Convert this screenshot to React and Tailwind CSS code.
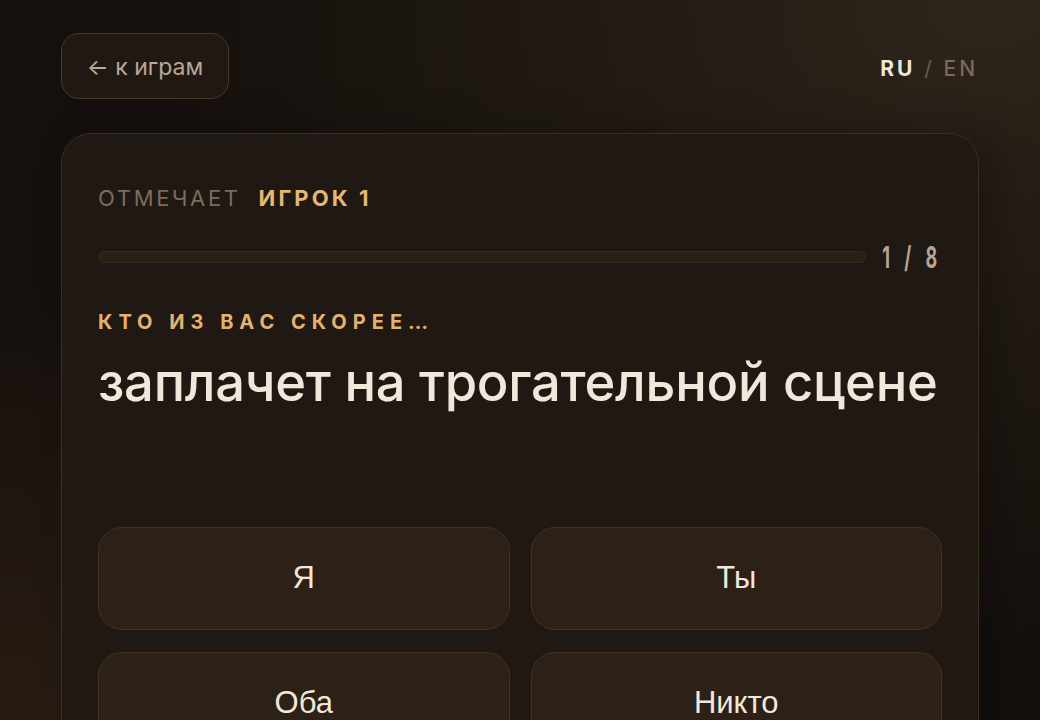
import React from 'react';

const answers = ['Я', 'Ты', 'Оба', 'Никто'];

function App() {
  return (
    <div className="min-h-screen w-full overflow-hidden bg-[#15100d] bg-[radial-gradient(ellipse_at_95%_0%,#2e251b_0%,#211a13_30%,transparent_60%),radial-gradient(ellipse_at_0%_100%,#2a1d13_0%,transparent_45%)] font-['Inter',sans-serif]">
      <div className="px-[61px] pt-[33px]">
        {/* top bar */}
        <div className="flex items-center justify-between">
          <button className="h-[66px] w-[168px] rounded-[18px] border border-[#4a3826] bg-[#201913] pt-[3px] text-[23px] text-[#b9a797]">
            ← к играм
          </button>
          <div className="mr-[1px] pt-[6px] text-[21px] font-bold tracking-[0.14em]">
            <span className="text-[#efe5d9]">RU</span>
            <span className="font-normal text-[#6e5c49]"> / </span>
            <span className="font-medium text-[#7c6a56]">EN</span>
          </div>
        </div>

        {/* question card */}
        <div className="mt-[34px] h-[640px] rounded-[30px] border border-[#3d2e1f] bg-[#201813] px-[36px] pt-[50px] shadow-[20px_0_40px_rgba(0,0,0,0.25)]">
          <div className="flex items-center text-[22px] leading-[28px] tracking-[0.12em]">
            <span className="text-[#7d6c5a]">ОТМЕЧАЕТ</span>
            <span className="ml-[18px] font-bold tracking-[0.14em] text-[#e6b672]">ИГРОК 1</span>
          </div>

          <div className="mt-[30px] flex items-center gap-[21px]">
            <div className="h-[12px] flex-1 rounded-full border border-[#3a2b1d] bg-[#2b2016]" />
            <span className="flex w-[55px] justify-end">
              <span className="inline-block origin-right scale-x-[0.6] whitespace-nowrap text-[30px] leading-[30px] font-bold tracking-[0.28em] text-[#b7a594]">
                1 / 8
              </span>
            </span>
          </div>

          <div className="mt-[38px] text-[20px] leading-[24px] font-bold tracking-[0.3em] text-[#e2b270]">
            КТО ИЗ ВАС СКОРЕЕ…
          </div>

          <h1 className="mt-[20px] text-[52.5px] leading-[56px] font-medium tracking-[-0.005em] text-[#f1e7db]">
            заплачет на трогательной сцене
          </h1>

          <div className="mt-[117px] grid grid-cols-2 gap-x-[21px] gap-y-[22px]">
            {answers.map((a) => (
              <button
                key={a}
                className="h-[103px] rounded-[24px] border border-[#42321f] bg-[#2c2017] text-[31px] text-[#f1e7db] font-['Liberation_Sans',sans-serif]"
              >
                {a}
              </button>
            ))}
          </div>
        </div>
      </div>
    </div>
  );
}

export default App;
